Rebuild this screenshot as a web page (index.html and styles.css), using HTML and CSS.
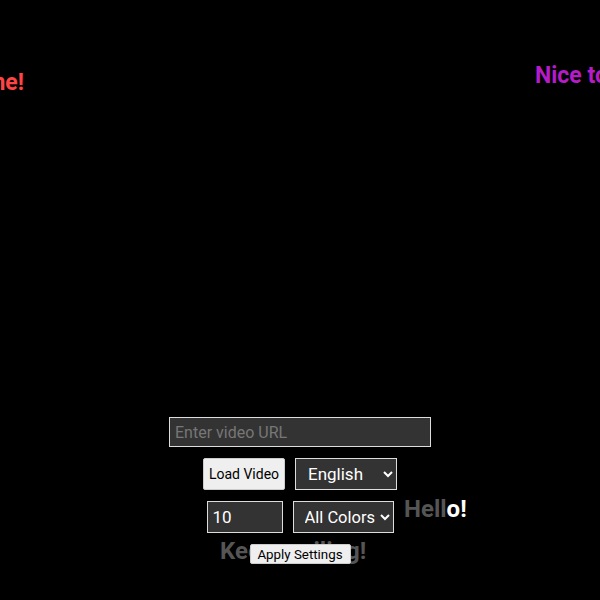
FILE: index.html
```html
<!DOCTYPE html>
<html lang="en">
<head>
<meta charset="utf-8">
<title>Video Player</title>
<link rel="stylesheet" href="styles.css">
</head>
<body>
<div class="float float-welcome">Welcome!</div>
<div class="float float-nice">Nice to meet you!</div>
<div class="float float-hello"><span class="dim">Hell</span><span class="lit">o!</span></div>
<div class="float float-keep">Keep smiling!</div>

<main class="controls">
  <div class="row">
    <input class="url" type="text" placeholder="Enter video URL">
  </div>
  <div class="row">
    <button class="load">Load Video</button>
    <select class="field lang">
      <option>English</option>
      <option>Español</option>
    </select>
  </div>
  <div class="row">
    <input class="field count" type="number" value="10">
    <select class="field colors">
      <option>All Colors</option>
      <option>Red</option>
    </select>
  </div>
  <div class="row">
    <button class="apply">Apply Settings</button>
  </div>
</main>
</body>
</html>
```
FILE: styles.css
```css
html, body {
  margin: 0;
  padding: 0;
  height: 100%;
  background: #000;
  overflow: hidden;
  font-family: Roboto, "Liberation Sans", Arial, sans-serif;
}

.controls {
  height: 100%;
  box-sizing: border-box;
  display: flex;
  flex-direction: column;
  justify-content: flex-end;
  align-items: center;
  gap: 11px;
  padding-bottom: 36px;
  position: relative;
  z-index: 2;
}

.row {
  display: flex;
  gap: 10px;
  align-items: center;
  justify-content: center;
}

.url,
.field {
  box-sizing: border-box;
  background: #333;
  color: #fff;
  border: 1px solid #ddd;
  border-radius: 0;
  font-family: Roboto, "Liberation Sans", Arial, sans-serif;
  font-size: 16px;
  margin: 0;
  outline: none;
}

.url {
  width: 262px;
  height: 30px;
  padding: 0 5px;
}

.url::placeholder {
  color: #777;
}

.count {
  width: 76px;
  height: 32px;
  padding: 0 5px;
  font-size: 17px;
  -moz-appearance: textfield;
}

.count::-webkit-outer-spin-button,
.count::-webkit-inner-spin-button {
  -webkit-appearance: none;
  margin: 0;
}

.lang {
  width: 102px;
  height: 32px;
  padding: 0 0 0 8px;
  font-size: 17px;
}

.colors {
  width: 101px;
  height: 32px;
  padding: 0 0 0 7px;
  font-size: 16.5px;
}

.load {
  box-sizing: border-box;
  width: 82px;
  height: 32px;
  padding: 0;
  margin: 0;
  white-space: nowrap;
  font-family: Roboto, "Liberation Sans", Arial, sans-serif;
  font-size: 14px;
  color: #000;
  background: #efefef;
  border: 1px solid #ccc;
  border-radius: 2px;
}

.apply {
  box-sizing: border-box;
  width: 101px;
  height: 20px;
  padding: 0;
  margin: 0;
  white-space: nowrap;
  font-family: Roboto, "Liberation Sans", Arial, sans-serif;
  font-size: 13.33px;
  color: #000;
  background: #efefef;
  border: 1px solid #ccc;
  border-radius: 2px;
}

.float {
  position: absolute;
  font-weight: bold;
  font-size: 23px;
  line-height: 28px;
  white-space: nowrap;
  z-index: 1;
}

.float-welcome {
  color: #ff4444;
  right: 576px;
  top: 69px;
}

.float-nice {
  color: #b51cc8;
  left: 535px;
  top: 62px;
}

.float-hello {
  left: 404px;
  top: 495px;
  font-size: 24px;
}

.float-hello .dim {
  color: #555;
}

.float-hello .lit {
  color: #fff;
}

.float-keep {
  color: #555;
  left: 220px;
  top: 537px;
  font-size: 24px;
}
```
